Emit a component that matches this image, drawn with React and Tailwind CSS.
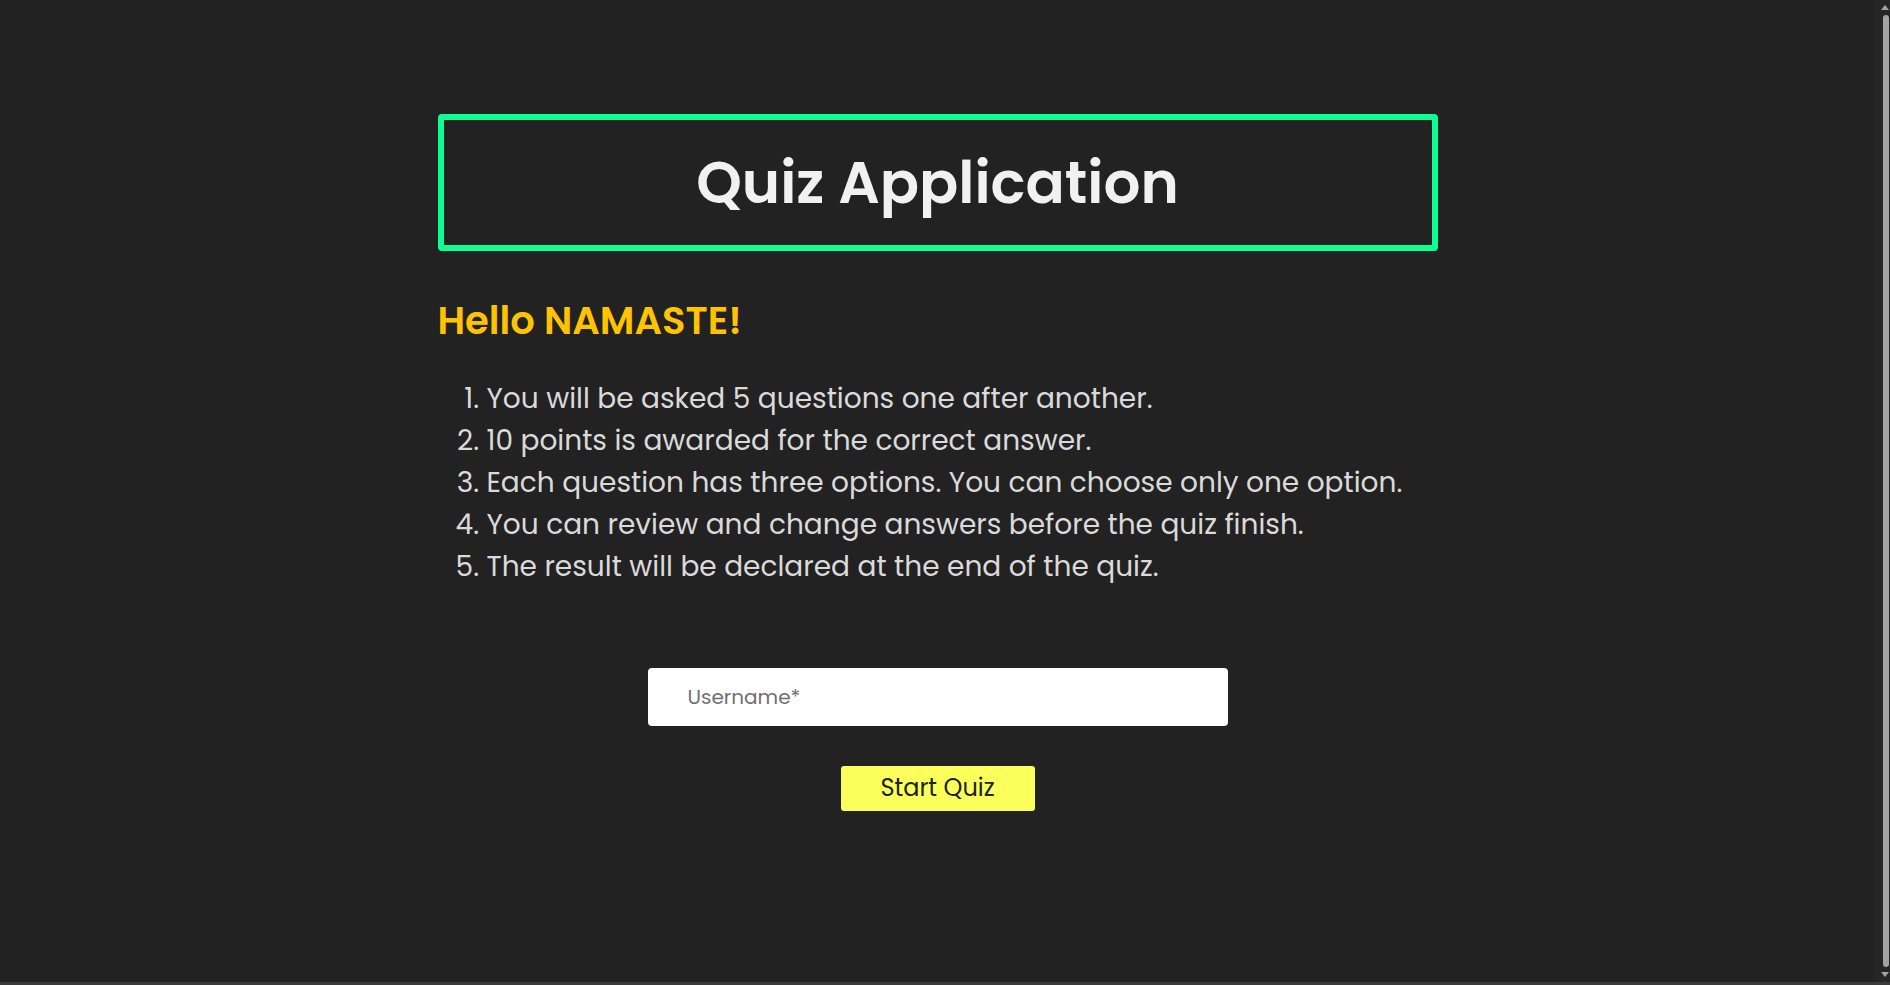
import { useState } from 'react';

const rules = [
  'You will be asked 5 questions one after another.',
  '10 points is awarded for the correct answer.',
  'Each question has three options. You can choose only one option.',
  'You can review and change answers before the quiz finish.',
  'The result will be declared at the end of the quiz.',
];

export default function App() {
  const [username, setUsername] = useState('');

  return (
    <div className="h-screen flex flex-col bg-[#222222] font-['Poppins','Open_Sans',sans-serif]">
      <div className="flex-1 min-h-0 flex">
        {/* page content */}
        <div className="flex-1 min-w-0">
          <div className="w-[1000px] mx-auto pt-[114px]">
            <div className="h-[137px] border-[6px] border-[#0dff92] rounded-[4px] flex items-center justify-center">
              <h1 className="text-[58px] leading-none font-semibold text-[#f1f1f1]">Quiz Application</h1>
            </div>

            <h2 className="mt-[51px] text-[38.5px] leading-none font-semibold text-[#ffc300]">Hello NAMASTE!</h2>

            <ol className="mt-[37px] list-decimal pl-[49px] text-[28px] leading-[42px] text-[#dadada]">
              {rules.map((r, i) => (
                <li key={i}>{r}</li>
              ))}
            </ol>

            {/* username + start */}
            <div className="mt-[80px] flex flex-col items-center">
              <input
                type="text"
                value={username}
                onChange={(e) => setUsername(e.target.value)}
                placeholder="Username*"
                className="w-[580px] h-[58px] rounded-[4px] bg-white pl-[40px] text-[20px] text-[#222] placeholder:text-[#707070] outline-none"
              />
              <button className="mt-[40px] w-[194px] h-[45px] rounded-[3px] bg-[#faff5a] text-[24px] text-[#222222]">
                Start Quiz
              </button>
            </div>
          </div>
        </div>

        {/* scrollbar */}
        <div className="w-[15px] bg-[#262626] flex flex-col items-end">
          <div className="h-[15px] w-full flex items-center justify-end pr-[1px]">
            <div className="w-0 h-0 border-l-[4px] border-r-[4px] border-b-[5px] border-l-transparent border-r-transparent border-b-[#a3a3a3]" />
          </div>
          <div className="flex-1 w-[6px] mr-[1px] rounded-[3px] bg-[#a3a3a3]" />
          <div className="h-[15px] w-full flex items-center justify-end pr-[1px]">
            <div className="w-0 h-0 border-l-[4px] border-r-[4px] border-t-[5px] border-l-transparent border-r-transparent border-t-[#a3a3a3]" />
          </div>
        </div>
      </div>
      <div className="h-[3px] bg-[#3a3a3a]" />
    </div>
  );
}
